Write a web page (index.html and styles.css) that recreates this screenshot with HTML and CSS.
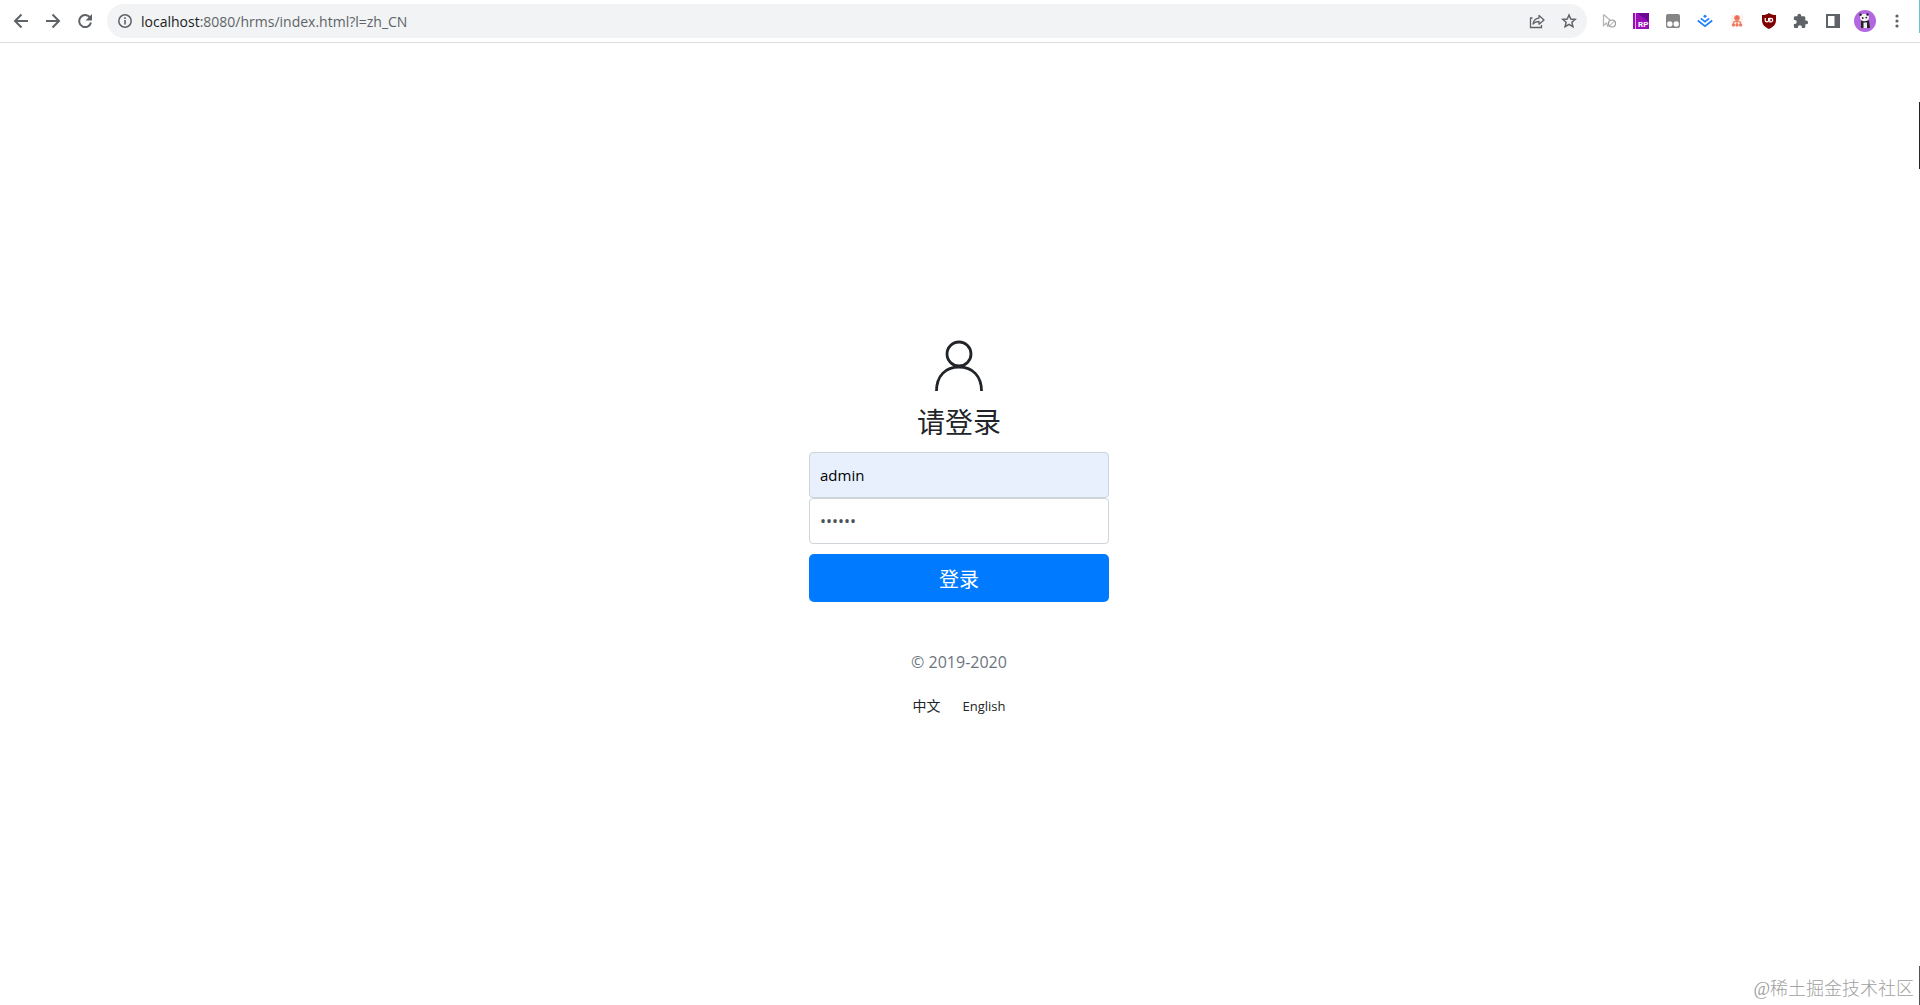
FILE: index.html
```html
<!DOCTYPE html>
<html lang="zh-CN">
<head>
<meta charset="UTF-8">
<meta name="viewport" content="width=device-width, initial-scale=1.0">
<title>请登录</title>
<link rel="stylesheet" href="styles.css">
</head>
<body>

<header class="toolbar">
  <nav class="nav-buttons">
    <button class="icon-btn" aria-label="Back">
      <svg width="16" height="16" viewBox="0 0 16 16" fill="none" stroke="#5f6368" stroke-width="2"><path d="M15 8H2.5M8.5 1.5L2 8l6.500 6.500"/></svg>
    </button>
    <button class="icon-btn" aria-label="Forward">
      <svg width="16" height="16" viewBox="0 0 16 16" fill="none" stroke="#5f6368" stroke-width="2"><path d="M1 8h12.500M7.500 1.500L14 8l-6.500 6.500"/></svg>
    </button>
    <button class="icon-btn" aria-label="Reload">
      <svg width="16" height="16" viewBox="0 0 16 16"><path d="M13.200 4.800A6 6 0 1 0 14 9.500" fill="none" stroke="#5f6368" stroke-width="2"/><path d="M15 1v6.500H8.500z" fill="#5f6368"/></svg>
    </button>
  </nav>

  <div class="omnibox">
    <svg width="16" height="16" viewBox="0 0 16 16" fill="none" stroke="#5f6368"><circle cx="8" cy="8" r="6.200" stroke-width="1.500"/><path d="M8 7v4.500M8 4.300v1.600" stroke-width="1.600"/></svg>
    <div class="url"><span class="host">localhost</span>:8080/hrms/index.html?l=zh_CN</div>
    <button class="icon-btn" aria-label="Share">
      <svg width="16" height="16" viewBox="0 0 16 16" fill="none" stroke="#5f6368" stroke-width="1.300"><path d="M3.500 5H1.500v9.500h11V12"/><path d="M4 11c.6-4 3-5.800 6-5.900V2.500L15 7l-5 4.200V8.500C7.500 8.400 5.500 9 4 11z" stroke-linejoin="round"/></svg>
    </button>
    <button class="icon-btn" aria-label="Bookmark">
      <svg width="16" height="16" viewBox="0 0 16 16" fill="none" stroke="#5f6368" stroke-width="1.500"><path d="M8 2l1.800 4 4.400.4-3.300 2.900 1 4.300L8 11.300l-3.900 2.300 1-4.300L1.800 6.400 6.200 6z"/></svg>
    </button>
  </div>

  <div class="extensions">
    <button class="icon-btn" aria-label="Cursor tool">
      <svg width="16" height="16" viewBox="0 0 16 16" fill="none" stroke="#b4b4b4"><path d="M2.500 1.500v11l3-2.500 1.500 4M2.500 1.500L9 7" stroke-width="1.300"/><circle cx="11" cy="10.500" r="3.500" stroke="#999" stroke-width="1.200"/><path d="M8.700 12.800l4.600-4.600" stroke="#999"/></svg>
    </button>
    <button class="icon-btn" aria-label="RP">
      <svg width="16" height="16" viewBox="0 0 16 16"><path d="M0 0h16v16H0z" fill="#9a10b8"/><path d="M4 0h12v9z" fill="#6a0a94"/><path d="M2 0h1v16H2z" fill="#e6a7ee"/><text x="5" y="14" class="rp-text">RP</text></svg>
    </button>
    <button class="icon-btn" aria-label="Tampermonkey">
      <svg width="16" height="16" viewBox="0 0 16 16"><rect x="1" y="1" width="14" height="14" rx="2" fill="#858585"/><circle cx="4.800" cy="11" r="2.700" fill="#fff"/><circle cx="11.200" cy="11" r="2.700" fill="#fff"/></svg>
    </button>
    <button class="icon-btn" aria-label="Juejin">
      <svg width="16" height="16" viewBox="0 0 16 16" fill="none" stroke="#1e80ff" stroke-width="1.700"><path d="M.8 7.500L8 13.200l7.200-5.700M3.800 5.400L8 8.700l4.200-3.300"/><path d="M6 3.200l2-1.600 2 1.600-2 1.700z" fill="#1e80ff" stroke="none"/></svg>
    </button>
    <button class="icon-btn" aria-label="Sitemap">
      <svg width="16" height="16" viewBox="0 0 16 16" fill="none" stroke="#f0806a"><path d="M2 2h12v12H2z" fill="#fdf1ec" stroke="none"/><circle cx="8" cy="5" r="2.400" fill="#ee6a50"/><path d="M8 6v5M4.500 11V9.500L8 7.500l3.500 2V11" stroke-width="1.300"/><path d="M3.500 11h2v2h-2zM7 11h2v2H7zM10.500 11h2v2h-2z" fill="#ee6a50"/></svg>
    </button>
    <button class="icon-btn" aria-label="uBlock">
      <svg width="16" height="16" viewBox="0 0 16 16"><path d="M8 0c2 1.500 4 2 7 2v5c0 5-3 7-7 9-4-2-7-4-7-9V2c3 0 5-.5 7-2z" fill="#800000"/><path d="M4.200 5v2.200a1.700 1.700 0 0 0 3.400 0V5M8.800 5.500v3.400h1.100a1.800 1.800 0 0 0 0-3.600H8.300" fill="none" stroke="#fff" stroke-width="1.200"/></svg>
    </button>
    <button class="icon-btn" aria-label="Extensions">
      <svg width="16" height="16" viewBox="0 0 16 16"><path d="M13.200 7.500h-.9V4.600c0-.8-.6-1.400-1.400-1.400H8.200V2.600a1.900 1.900 0 0 0-3.800 0v.6H2.300c-.8 0-1.400.6-1.400 1.400v2.500h.8a2 2 0 0 1 0 4H.9v2.600c0 .8.600 1.400 1.400 1.400h2.600v-.8a2 2 0 0 1 4 0v.8h2c.8 0 1.400-.6 1.400-1.400v-2.400h.9a1.900 1.900 0 0 0 0-3.800z" fill="#5f6368"/></svg>
    </button>
    <button class="icon-btn" aria-label="Side panel">
      <svg width="16" height="16" viewBox="0 0 16 16"><path d="M1 1h14v14H1z" fill="#5f6368"/><path d="M3 3h6.500v10H3z" fill="#fff"/></svg>
    </button>
    <button class="icon-btn" aria-label="Profile">
      <svg width="22" height="22" viewBox="0 0 22 22"><circle cx="11" cy="11" r="11" fill="#b266e0"/><path d="M7 10.500h8l1 7.500H7z" fill="#222"/><path d="M9.500 12.500h3.500V18H9.500z" fill="#eee"/><ellipse cx="10.500" cy="7.500" rx="4.500" ry="3.800" fill="#f4f4f4"/><circle cx="6.500" cy="4.800" r="1.200" fill="#222"/><circle cx="13.500" cy="4.500" r="1.200" fill="#222"/><circle cx="8.700" cy="8" r=".9" fill="#222"/><circle cx="12.300" cy="7.600" r=".9" fill="#222"/></svg>
    </button>
    <button class="icon-btn" aria-label="Menu">
      <svg width="16" height="16" viewBox="0 0 16 16" fill="#5f6368"><circle cx="8" cy="3" r="1.600"/><circle cx="8" cy="8" r="1.600"/><circle cx="8" cy="13" r="1.600"/></svg>
    </button>
  </div>
</header>

<main class="page">
  <form class="form-signin">
    <svg class="logo" width="50" height="52" viewBox="0 0 50 52" fill="none" stroke="#212529" stroke-width="2.800"><circle cx="25" cy="14" r="12"/><path d="M2.500 51c0-15 9-24 22.500-24s22.500 9 22.500 24"/></svg>
    <h1 class="title">请登录</h1>
    <input class="form-control autofilled" type="text" id="username" aria-label="用户名" value="admin">
    <input class="form-control" type="password" id="password" aria-label="密码" value="123456">
    <button class="btn-login" type="submit">登录</button>
    <p class="copyright">© 2019-2020</p>
    <div class="langs">
      <a href="?l=zh_CN">中文</a>
      <a class="lang-en" href="?l=en_US">English</a>
    </div>
  </form>
</main>

<div class="watermark">@稀土掘金技术社区</div>
<div class="edge edge-top"></div>
<div class="edge edge-middle"></div>
<div class="edge edge-bottom"></div>

</body>
</html>
```

FILE: styles.css
```css
* {
  box-sizing: border-box;
}
body {
  margin: 0;
  min-height: 100vh;
  display: flex;
  flex-direction: column;
  font-family: "Open Sans", "Noto Sans CJK SC", sans-serif;
  font-size: 16px;
  color: #212529;
  background-color: #fff;
}

/* browser bar */
.toolbar {
  display: flex;
  align-items: center;
  height: 43px;
  padding: 0 15px 0 13px;
  border-bottom: 1px solid #dadce0;
}
.nav-buttons {
  display: flex;
  gap: 16px;
  margin-right: 14px;
}
.icon-btn {
  display: flex;
  align-items: center;
  justify-content: center;
  width: 16px;
  height: 16px;
  padding: 0;
  border: 0;
  background: none;
  cursor: pointer;
}
.icon-btn svg {
  flex-shrink: 0;
}
.omnibox {
  flex: 1;
  display: flex;
  align-items: center;
  gap: 16px;
  height: 34px;
  padding: 0 10px;
  border-radius: 17px;
  background-color: #f1f3f4;
}
.url {
  flex: 1;
  margin-left: -8px;
  font-size: 14px;
  color: #5f6368;
}
.host {
  color: #202124;
}
.extensions {
  display: flex;
  gap: 16px;
  margin-left: 14px;
}
.rp-text {
  font-family: Roboto, sans-serif;
  font-size: 8px;
  font-weight: 700;
  fill: #fff;
}

/* login form */
.page {
  flex: 1;
  display: flex;
  align-items: center;
  justify-content: center;
  padding: 10px 2px 0 0;
}
.form-signin {
  display: flex;
  flex-direction: column;
  align-items: center;
  width: 300px;
}
.title {
  margin: 12px 0;
  font-size: 28px;
  font-weight: 400;
  line-height: 36px;
}
.form-control {
  width: 100%;
  height: 46px;
  padding: 10px;
  border: 1px solid #ced4da;
  border-radius: 4px;
  font-family: inherit;
  font-size: 16px;
  color: #495057;
  background-color: #fff;
}
.autofilled {
  font-size: 15px;
  color: #000;
  background-color: #e8f0fe;
}
.btn-login {
  width: 100%;
  height: 48px;
  margin: 10px 0 48px;
  border: 0;
  border-radius: 5px;
  font-family: inherit;
  font-size: 20px;
  color: #fff;
  background-color: #007bff;
  cursor: pointer;
}
.copyright {
  margin: 0 0 20px;
  line-height: 24px;
  color: #6c757d;
}
.langs {
  display: flex;
  gap: 22px;
  font-size: 14px;
  line-height: 24px;
}
.langs a {
  color: #212529;
  text-decoration: none;
}
.langs .lang-en {
  font-size: 13px;
}

.watermark {
  position: absolute;
  right: 6px;
  bottom: 4px;
  font-family: "Liberation Serif", "Noto Sans CJK SC", serif;
  font-size: 18px;
  font-weight: 300;
  line-height: 24px;
  color: #a0a0a0;
}

/* strips of the window behind */
.edge {
  position: absolute;
  right: 0;
  width: 1px;
  background-color: #222;
}
.edge-top {
  top: 0;
  height: 33px;
  background-color: #6cc3cf;
}
.edge-middle {
  top: 102px;
  height: 67px;
}
.edge-bottom {
  bottom: 0;
  height: 39px;
  background-color: #555;
}
```
